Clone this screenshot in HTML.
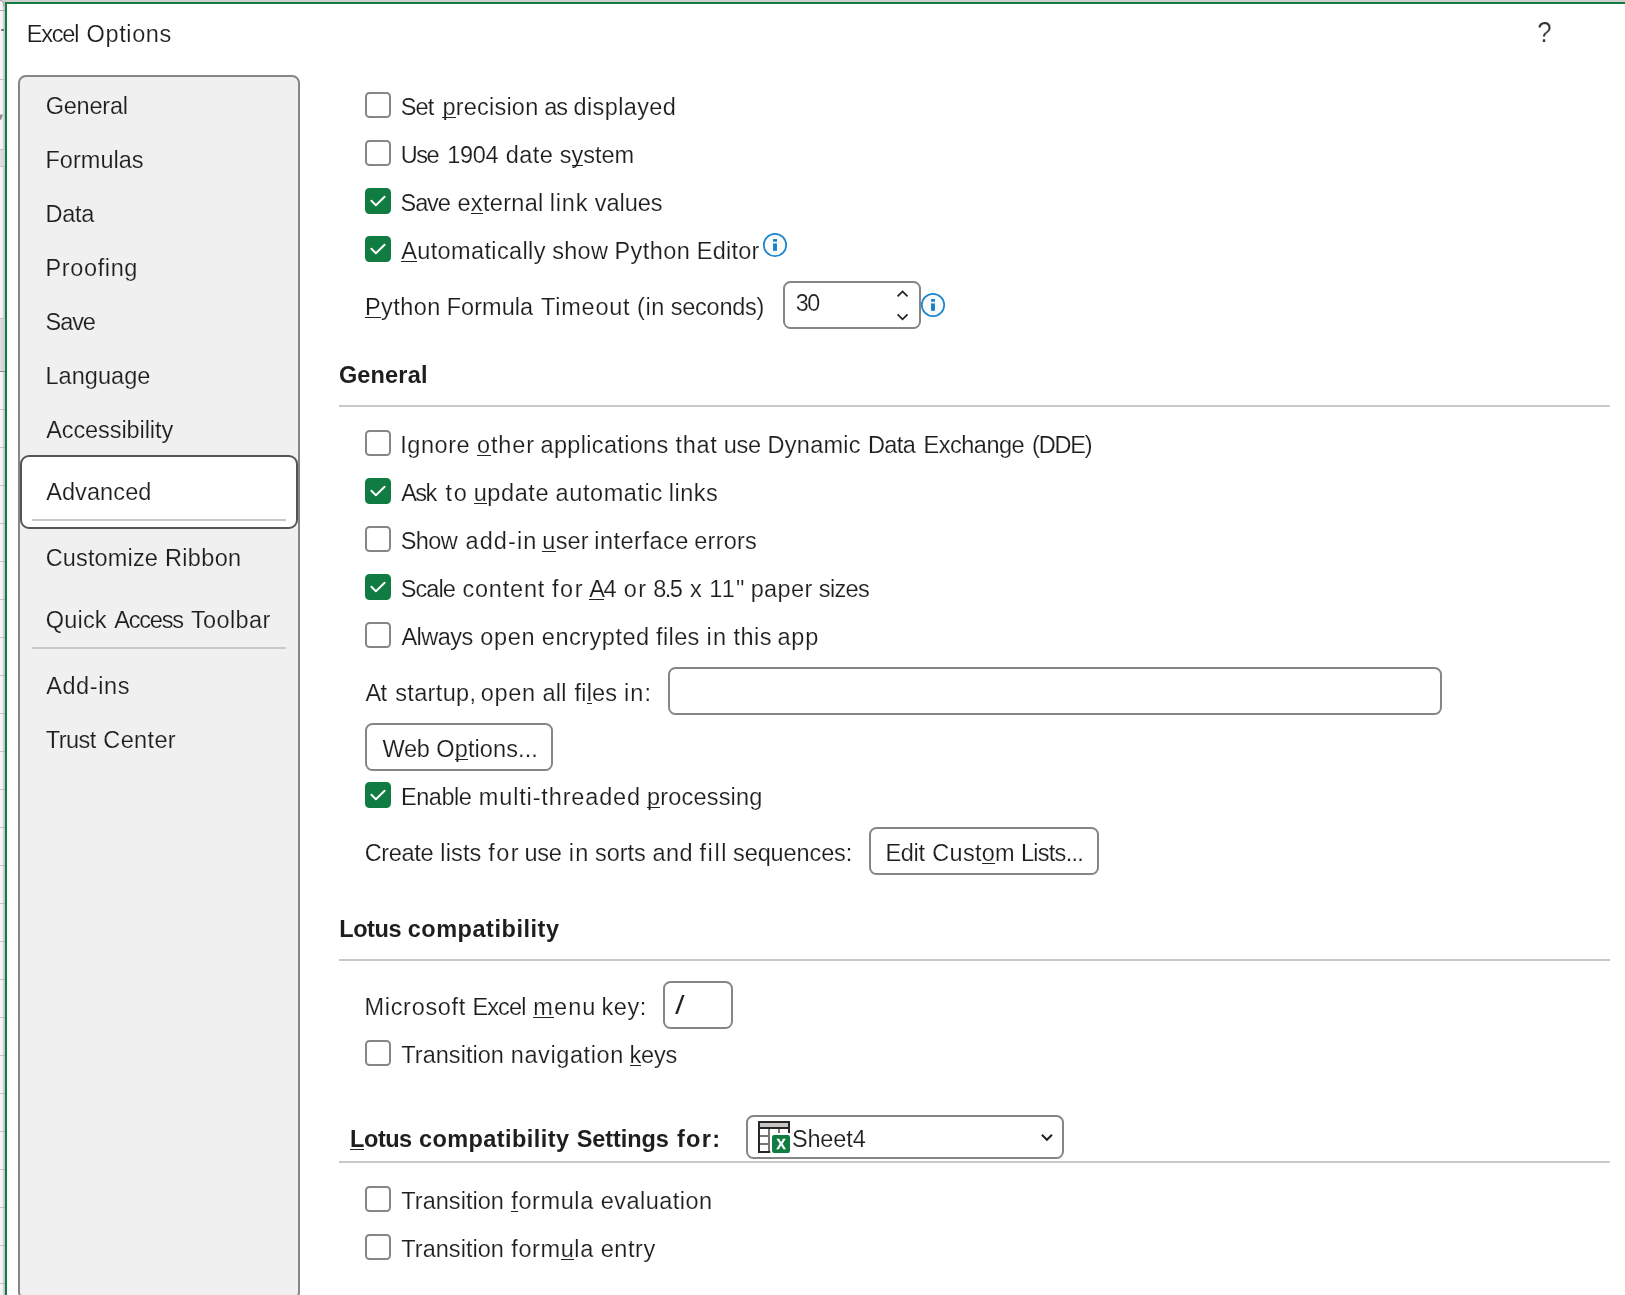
<!DOCTYPE html>
<html lang="en"><head><meta charset="utf-8"><title>Excel Options</title>
<style>
html,body{margin:0;padding:0}
body{width:1625px;height:1295px;overflow:hidden;background:#fff;position:relative;font-family:"Liberation Sans",sans-serif;color:#1e1e1e}
.a{position:absolute}
.t{position:absolute;white-space:nowrap;line-height:30px;font-size:23.5px;-webkit-text-stroke:0.15px #fff}
.t.n{-webkit-text-stroke-color:#f0f0f0}
.t.b{-webkit-text-stroke-width:0}
.t u{text-decoration:none;position:relative}
.t u::after{content:"";position:absolute;left:0;right:0;top:22.85px;height:1.2px;background:#242424}
.t.b u::after{height:1.6px}
.b{font-weight:bold}
.w{position:absolute;left:0;top:0;white-space:pre}
.cb{position:absolute;left:365px;width:22px;height:22px;border:2px solid #868686;border-radius:4.5px;background:#fff}
.cb.on{background:#107c41;border-color:#107c41}
.cb svg{position:absolute;left:-2px;top:-2px}
.box{position:absolute;box-sizing:border-box;border:2px solid #868686;border-radius:7.5px;background:#fff}
.hr{position:absolute;left:339px;width:1271px;height:2px;background:#c8c8c8}
.sep{position:absolute;left:32px;width:254px;height:2px;background:#c8c8c8}
</style></head>
<body>
<div id="dlg" class="a" style="left:0;top:0;width:1625px;height:1295px;overflow:hidden;will-change:transform">
<!-- spreadsheet behind the dialog -->
<div class="a" style="left:0;top:0;width:1625px;height:2px;background:#d0cdcf"></div>
<div class="a" style="left:0;top:0;width:5px;height:1295px;background:linear-gradient(90deg,#f6f6f6 0 1px,#f5f5f5 1px 2px,#ececec 2px 3px,#d6d6d6 3px 4px,#c6c3c6 4px 5px)"></div>
<div class="a" style="left:0;top:149px;width:5px;height:17px;background:linear-gradient(90deg,#e4e4e4,#cfcfcf)"></div>
<div class="a" style="left:0;top:319px;width:5px;height:53px;background:linear-gradient(90deg,#e0e0e0,#cdcdcd)"></div>
<div class="a" style="left:0;top:79px;width:5px;height:1px;background:#c2c2c2"></div>
<div class="a" style="left:0;top:149px;width:5px;height:1px;background:#c2c2c2"></div>
<div class="a" style="left:0;top:166px;width:5px;height:1px;background:#c2c2c2"></div>
<div class="a" style="left:0;top:318px;width:5px;height:1px;background:#c2c2c2"></div>
<div class="a" style="left:0;top:371px;width:5px;height:1px;background:#8a8a8a"></div>
<div class="a" style="left:0;top:409px;width:5px;height:1px;background:linear-gradient(90deg,#d4d4d4,#b4b0b4)"></div>
<div class="a" style="left:0;top:447px;width:5px;height:1px;background:linear-gradient(90deg,#d4d4d4,#b4b0b4)"></div>
<div class="a" style="left:0;top:485px;width:5px;height:1px;background:linear-gradient(90deg,#d4d4d4,#b4b0b4)"></div>
<div class="a" style="left:0;top:523px;width:5px;height:1px;background:linear-gradient(90deg,#d4d4d4,#b4b0b4)"></div>
<div class="a" style="left:0;top:561px;width:5px;height:1px;background:linear-gradient(90deg,#d4d4d4,#b4b0b4)"></div>
<div class="a" style="left:0;top:599px;width:5px;height:1px;background:linear-gradient(90deg,#d4d4d4,#b4b0b4)"></div>
<div class="a" style="left:0;top:637px;width:5px;height:1px;background:linear-gradient(90deg,#d4d4d4,#b4b0b4)"></div>
<div class="a" style="left:0;top:675px;width:5px;height:1px;background:linear-gradient(90deg,#d4d4d4,#b4b0b4)"></div>
<div class="a" style="left:0;top:713px;width:5px;height:1px;background:linear-gradient(90deg,#d4d4d4,#b4b0b4)"></div>
<div class="a" style="left:0;top:751px;width:5px;height:1px;background:linear-gradient(90deg,#d4d4d4,#b4b0b4)"></div>
<div class="a" style="left:0;top:789px;width:5px;height:1px;background:linear-gradient(90deg,#d4d4d4,#b4b0b4)"></div>
<div class="a" style="left:0;top:827px;width:5px;height:1px;background:linear-gradient(90deg,#d4d4d4,#b4b0b4)"></div>
<div class="a" style="left:0;top:865px;width:5px;height:1px;background:linear-gradient(90deg,#d4d4d4,#b4b0b4)"></div>
<div class="a" style="left:0;top:903px;width:5px;height:1px;background:linear-gradient(90deg,#d4d4d4,#b4b0b4)"></div>
<div class="a" style="left:0;top:941px;width:5px;height:1px;background:linear-gradient(90deg,#d4d4d4,#b4b0b4)"></div>
<div class="a" style="left:0;top:979px;width:5px;height:1px;background:linear-gradient(90deg,#d4d4d4,#b4b0b4)"></div>
<div class="a" style="left:0;top:1017px;width:5px;height:1px;background:linear-gradient(90deg,#d4d4d4,#b4b0b4)"></div>
<div class="a" style="left:0;top:1055px;width:5px;height:1px;background:linear-gradient(90deg,#d4d4d4,#b4b0b4)"></div>
<div class="a" style="left:0;top:1093px;width:5px;height:1px;background:linear-gradient(90deg,#d4d4d4,#b4b0b4)"></div>
<div class="a" style="left:0;top:1131px;width:5px;height:1px;background:linear-gradient(90deg,#d4d4d4,#b4b0b4)"></div>
<div class="a" style="left:0;top:1169px;width:5px;height:1px;background:linear-gradient(90deg,#d4d4d4,#b4b0b4)"></div>
<div class="a" style="left:0;top:1207px;width:5px;height:1px;background:linear-gradient(90deg,#d4d4d4,#b4b0b4)"></div>
<div class="a" style="left:0;top:1245px;width:5px;height:1px;background:linear-gradient(90deg,#d4d4d4,#b4b0b4)"></div>
<div class="a" style="left:0;top:1283px;width:5px;height:1px;background:linear-gradient(90deg,#d4d4d4,#b4b0b4)"></div>
<div class="a" style="left:-2px;top:0;width:5px;height:5px;border:1.3px solid #a3a0a3;border-left:0;border-bottom:0;border-top-right-radius:4px"></div>
<div class="a" style="left:0;top:10px;width:5px;height:1.4px;background:#a9a7a9"></div>
<div class="a" style="left:1px;top:29px;width:3px;height:2px;background:#7d7d7d"></div>
<svg class="a" style="left:0;top:113px" width="5" height="9" viewBox="0 0 5 9"><path d="M0 1.6 H3 L1.2 6.4 L0 6.9 Z" fill="#8e8e8e"/></svg>
<div class="a" style="left:5px;top:2px;width:1620px;height:2px;background:#107c41"></div>
<div class="a" style="left:5px;top:2px;width:2px;height:1293px;background:#107c41"></div>
<div class="a" style="left:18px;top:75px;width:278px;height:1221px;border:2px solid #868686;border-radius:8px;background:#f0f0f0"></div>
<div class="a" style="left:20px;top:455px;width:274px;height:70px;border:2px solid #555;border-radius:9px;background:#fff"></div>
<div class="sep" style="top:519px"></div>
<div class="sep" style="top:647px"></div>
<div class="hr" style="top:405px"></div>
<div class="hr" style="top:959px"></div>
<div class="hr" style="top:1161px"></div>
<div class="cb" style="top:92px"></div>
<div class="cb" style="top:140px"></div>
<div class="cb on" style="top:188px"><svg width="26" height="26" viewBox="0 0 26 26"><path d="M6.4 12.7 L10.9 17.2 L19.6 8.7" fill="none" stroke="#fff" stroke-width="2" stroke-linecap="round" stroke-linejoin="round"/></svg></div>
<div class="cb on" style="top:236px"><svg width="26" height="26" viewBox="0 0 26 26"><path d="M6.4 12.7 L10.9 17.2 L19.6 8.7" fill="none" stroke="#fff" stroke-width="2" stroke-linecap="round" stroke-linejoin="round"/></svg></div>
<div class="cb" style="top:430px"></div>
<div class="cb on" style="top:478px"><svg width="26" height="26" viewBox="0 0 26 26"><path d="M6.4 12.7 L10.9 17.2 L19.6 8.7" fill="none" stroke="#fff" stroke-width="2" stroke-linecap="round" stroke-linejoin="round"/></svg></div>
<div class="cb" style="top:526px"></div>
<div class="cb on" style="top:574px"><svg width="26" height="26" viewBox="0 0 26 26"><path d="M6.4 12.7 L10.9 17.2 L19.6 8.7" fill="none" stroke="#fff" stroke-width="2" stroke-linecap="round" stroke-linejoin="round"/></svg></div>
<div class="cb" style="top:622px"></div>
<div class="cb on" style="top:782px"><svg width="26" height="26" viewBox="0 0 26 26"><path d="M6.4 12.7 L10.9 17.2 L19.6 8.7" fill="none" stroke="#fff" stroke-width="2" stroke-linecap="round" stroke-linejoin="round"/></svg></div>
<div class="cb" style="top:1040px"></div>
<div class="cb" style="top:1186px"></div>
<div class="cb" style="top:1234px"></div>
<div class="box" style="left:783px;top:281px;width:138px;height:48px"></div>
<div class="box" style="left:668px;top:667px;width:774px;height:48px"></div>
<div class="box" style="left:365px;top:723px;width:188px;height:48px"></div>
<div class="box" style="left:869px;top:827px;width:230px;height:48px"></div>
<div class="box" style="left:663px;top:981px;width:70px;height:48px"></div>
<div class="box" style="left:746px;top:1115px;width:318px;height:44px"></div>
<svg class="a" style="left:894px;top:286px" width="18" height="40" viewBox="0 0 18 40"><path d="M3.6 10.4 L8.55 5.45 L13.5 10.4 M3.6 28.4 L8.55 33.35 L13.5 28.4" fill="none" stroke="#1f1f1f" stroke-width="1.7" stroke-linecap="butt" stroke-linejoin="miter"/></svg>
<svg class="a" style="left:1036px;top:1128px" width="22" height="20" viewBox="0 0 22 20"><path d="M5.85 6.7 L10.92 11.75 L16 6.7" fill="none" stroke="#232323" stroke-width="2" stroke-linecap="butt" stroke-linejoin="miter"/></svg>
<svg class="a" style="left:762px;top:232px" width="26" height="26" viewBox="0 0 26 26"><circle cx="13" cy="13" r="11.2" fill="#fbfbfb" stroke="#1b86cf" stroke-width="1.7"/><rect x="11.05" y="11.4" width="3.9" height="7.4" fill="#1580cc"/><rect x="11.05" y="7.05" width="3.95" height="2.65" fill="#1580cc"/></svg>
<svg class="a" style="left:920px;top:292px" width="26" height="26" viewBox="0 0 26 26"><circle cx="13" cy="13" r="11.2" fill="#fbfbfb" stroke="#1b86cf" stroke-width="1.7"/><rect x="11.05" y="11.4" width="3.9" height="7.4" fill="#1580cc"/><rect x="11.05" y="7.05" width="3.95" height="2.65" fill="#1580cc"/></svg>
<svg class="a" style="left:756px;top:1119px" width="36" height="36" viewBox="0 0 36 36">
<rect x="3" y="3" width="30" height="6" fill="#c8c6c4"/>
<path d="M3 3 H33 V9 H3 Z" fill="none" stroke="#292827" stroke-width="2"/>
<path d="M3 9 V33 H14.3 M33 9 V14" fill="none" stroke="#292827" stroke-width="2"/>
<path d="M13 10 V32 M4 17 H12 M4 25 H12 M23 10 V14" fill="none" stroke="#797775" stroke-width="2"/>
<rect x="16" y="16" width="18" height="18" rx="2.2" fill="#107c41"/>
<text x="25.1" y="30.1" text-anchor="middle" font-family="Liberation Sans, sans-serif" font-weight="bold" font-size="13.8" fill="#fff" stroke="#fff" stroke-width=".35">X</text>
</svg>
<div class="t" style="left:1536.1px;top:12px;font-size:30px;line-height:40px;color:#333;transform:scaleX(.86);transform-origin:50% 50%">?</div>
<div class="t" style="left:0;top:19px"><span class="w" style="left:26.70px;letter-spacing:-1.197px">Excel </span><span class="w" style="left:86.54px;letter-spacing:0.627px">Options</span></div>
<div class="t n" style="left:0;top:91px"><span class="w" style="left:45.66px;letter-spacing:-0.210px">General</span></div>
<div class="t n" style="left:0;top:145px"><span class="w" style="left:45.50px;letter-spacing:0.014px">Formulas</span></div>
<div class="t n" style="left:0;top:199px"><span class="w" style="left:45.50px;letter-spacing:-0.254px">Data</span></div>
<div class="t n" style="left:0;top:253px"><span class="w" style="left:45.50px;letter-spacing:0.629px">Proofing</span></div>
<div class="t n" style="left:0;top:307px"><span class="w" style="left:45.58px;letter-spacing:-1.093px">Save</span></div>
<div class="t n" style="left:0;top:361px"><span class="w" style="left:45.50px;letter-spacing:0.044px">Language</span></div>
<div class="t n" style="left:0;top:415px"><span class="w" style="left:46.14px;letter-spacing:-0.074px">Accessibility</span></div>
<div class="t" style="left:0;top:477px"><span class="w" style="left:46.14px;letter-spacing:0.109px">Advanced</span></div>
<div class="t n" style="left:0;top:543px"><span class="w" style="left:45.66px;letter-spacing:0.155px">Customize </span><span class="w" style="left:164.90px;letter-spacing:0.360px">Ribbon</span></div>
<div class="t n" style="left:0;top:605px"><span class="w" style="left:45.74px;letter-spacing:0.195px">Quick </span><span class="w" style="left:114.34px;letter-spacing:-1.210px">Access </span><span class="w" style="left:190.96px;letter-spacing:0.390px">Toolbar</span></div>
<div class="t n" style="left:0;top:671px"><span class="w" style="left:46.14px;letter-spacing:0.608px">Add-ins</span></div>
<div class="t n" style="left:0;top:725px"><span class="w" style="left:45.86px;letter-spacing:-0.561px">Trust </span><span class="w" style="left:103.36px;letter-spacing:0.349px">Center</span></div>
<div class="t" style="left:0;top:92px"><span class="w" style="left:400.68px;letter-spacing:-0.787px">Set </span><span class="w" style="left:442.45px;letter-spacing:0.214px"><u>p</u>recision </span><span class="w" style="left:544.30px;letter-spacing:-1.214px">as </span><span class="w" style="left:573.60px;letter-spacing:0.356px">displayed</span></div>
<div class="t" style="left:0;top:140px"><span class="w" style="left:400.80px;letter-spacing:-1.517px">Use </span><span class="w" style="left:447.20px;letter-spacing:-0.304px">1904 </span><span class="w" style="left:505.70px;letter-spacing:0.489px">date </span><span class="w" style="left:559.86px;letter-spacing:-0.025px">s<u>y</u>stem</span></div>
<div class="t" style="left:0;top:188px"><span class="w" style="left:400.58px;letter-spacing:-1.126px">Save </span><span class="w" style="left:457.45px;letter-spacing:0.321px">e<u>x</u>ternal </span><span class="w" style="left:549.81px;letter-spacing:0.808px">link </span><span class="w" style="left:594.83px;letter-spacing:-0.046px">values</span></div>
<div class="t" style="left:0;top:236px"><span class="w" style="left:401.24px;letter-spacing:0.371px"><u>A</u>utomatically </span><span class="w" style="left:552.36px;letter-spacing:0.214px">show </span><span class="w" style="left:614.40px;letter-spacing:0.473px">Python </span><span class="w" style="left:696.80px;letter-spacing:0.234px">Editor</span></div>
<div class="t" style="left:0;top:292px"><span class="w" style="left:364.90px;letter-spacing:0.453px"><u>P</u>ython </span><span class="w" style="left:446.70px;letter-spacing:0.049px">Formula </span><span class="w" style="left:541.06px;letter-spacing:0.756px">Timeout </span><span class="w" style="left:637.12px;letter-spacing:0.573px">(in </span><span class="w" style="left:670.76px;letter-spacing:-0.242px">seconds)</span></div>
<div class="t" style="left:0;top:288px;font-size:23.3px"><span class="w" style="left:795.81px;letter-spacing:-1.408px">30</span></div>
<div class="t b" style="left:0;top:360px"><span class="w" style="left:338.90px;letter-spacing:0.177px">General</span></div>
<div class="t" style="left:0;top:430px"><span class="w" style="left:400.30px;letter-spacing:0.540px">Ignore </span><span class="w" style="left:477.00px;letter-spacing:0.852px"><u>o</u>ther </span><span class="w" style="left:540.60px;letter-spacing:0.318px">applications </span><span class="w" style="left:675.43px;letter-spacing:0.761px">that </span><span class="w" style="left:723.76px;letter-spacing:-0.248px">use </span><span class="w" style="left:767.50px;letter-spacing:0.281px">Dynamic </span><span class="w" style="left:867.90px;letter-spacing:-0.588px">Data </span><span class="w" style="left:923.60px;letter-spacing:-0.499px">Exchange </span><span class="w" style="left:1032.12px;letter-spacing:-1.211px">(DDE)</span></div>
<div class="t" style="left:0;top:478px"><span class="w" style="left:401.29px;letter-spacing:-1.600px">Ask </span><span class="w" style="left:445.60px;letter-spacing:1.600px">to </span><span class="w" style="left:473.66px;letter-spacing:0.601px"><u>u</u>pdate </span><span class="w" style="left:555.60px;letter-spacing:0.587px">automatic </span><span class="w" style="left:668.71px;letter-spacing:0.522px">links</span></div>
<div class="t" style="left:0;top:526px"><span class="w" style="left:400.68px;letter-spacing:-0.537px">Show </span><span class="w" style="left:465.60px;letter-spacing:1.064px">add-in </span><span class="w" style="left:542.36px;letter-spacing:0.195px"><u>u</u>ser </span><span class="w" style="left:594.32px;letter-spacing:0.473px">interface </span><span class="w" style="left:694.25px;letter-spacing:0.244px">errors</span></div>
<div class="t" style="left:0;top:574px"><span class="w" style="left:400.68px;letter-spacing:-0.929px">Scale </span><span class="w" style="left:462.46px;letter-spacing:0.789px">content </span><span class="w" style="left:551.91px;letter-spacing:1.600px">for </span><span class="w" style="left:589.34px;letter-spacing:-1.437px"><u>A</u>4 </span><span class="w" style="left:623.80px;letter-spacing:1.447px">or </span><span class="w" style="left:653.21px;letter-spacing:-1.464px">8.5 </span><span class="w" style="left:690.10px">x </span><span class="w" style="left:709.20px;letter-spacing:1.252px">11&quot; </span><span class="w" style="left:750.65px;letter-spacing:0.389px">paper </span><span class="w" style="left:818.86px;letter-spacing:-0.683px">sizes</span></div>
<div class="t" style="left:0;top:622px"><span class="w" style="left:401.44px;letter-spacing:-0.521px">Always </span><span class="w" style="left:480.20px;letter-spacing:0.708px">open </span><span class="w" style="left:541.85px;letter-spacing:0.512px">encrypted </span><span class="w" style="left:656.05px;letter-spacing:0.383px">files </span><span class="w" style="left:706.42px;letter-spacing:1.308px">in </span><span class="w" style="left:733.43px;letter-spacing:0.535px">this </span><span class="w" style="left:777.50px;letter-spacing:0.802px">app</span></div>
<div class="t" style="left:0;top:678px"><span class="w" style="left:365.44px;letter-spacing:-0.627px">At </span><span class="w" style="left:395.16px;letter-spacing:0.362px">startup, </span><span class="w" style="left:480.70px;letter-spacing:0.708px">open </span><span class="w" style="left:542.50px;letter-spacing:0.256px">all </span><span class="w" style="left:574.55px;letter-spacing:0.183px">fi<u>l</u>es </span><span class="w" style="left:624.02px;letter-spacing:1.078px">in:</span></div>
<div class="t" style="left:0;top:734px"><span class="w" style="left:382.43px;letter-spacing:-0.257px">Web </span><span class="w" style="left:436.34px;letter-spacing:0.097px">O<u>p</u>tions...</span></div>
<div class="t" style="left:0;top:782px"><span class="w" style="left:401.00px;letter-spacing:-0.460px">Enable </span><span class="w" style="left:478.80px;letter-spacing:0.850px">multi-threaded </span><span class="w" style="left:647.05px;letter-spacing:0.173px"><u>p</u>rocessing</span></div>
<div class="t" style="left:0;top:838px"><span class="w" style="left:364.76px;letter-spacing:-0.351px">Create </span><span class="w" style="left:440.31px;letter-spacing:0.130px">lists </span><span class="w" style="left:488.35px;letter-spacing:1.458px">for </span><span class="w" style="left:524.56px;letter-spacing:-0.348px">use </span><span class="w" style="left:568.82px;letter-spacing:1.308px">in </span><span class="w" style="left:595.06px;letter-spacing:-0.066px">sorts </span><span class="w" style="left:652.50px;letter-spacing:0.373px">and </span><span class="w" style="left:699.46px;letter-spacing:1.600px">fill </span><span class="w" style="left:733.06px;letter-spacing:-0.107px">sequences:</span></div>
<div class="t" style="left:0;top:838px"><span class="w" style="left:885.40px;letter-spacing:-0.259px">Edit </span><span class="w" style="left:932.36px;letter-spacing:0.244px">Cust<u>o</u>m </span><span class="w" style="left:1021.00px;letter-spacing:-0.738px">Lists...</span></div>
<div class="t b" style="left:0;top:914px"><span class="w" style="left:339.32px;letter-spacing:-0.454px">Lotus </span><span class="w" style="left:407.70px;letter-spacing:0.534px">compatibility</span></div>
<div class="t" style="left:0;top:992px"><span class="w" style="left:364.50px;letter-spacing:0.689px">Microsoft </span><span class="w" style="left:472.40px;letter-spacing:-0.847px">Excel </span><span class="w" style="left:533.30px;letter-spacing:1.100px"><u>m</u>enu </span><span class="w" style="left:601.52px;letter-spacing:0.538px">key:</span></div>
<div class="t" style="left:0;top:990px;font-size:25.4px"><span class="w" style="left:675.20px;transform:scaleX(1.373);transform-origin:0 50%">/</span></div>
<div class="t" style="left:0;top:1040px"><span class="w" style="left:401.26px;letter-spacing:0.040px">Transition </span><span class="w" style="left:510.80px;letter-spacing:0.585px">navigation </span><span class="w" style="left:629.52px;letter-spacing:-0.182px"><u>k</u>eys</span></div>
<div class="t b" style="left:0;top:1124px"><span class="w" style="left:350.12px;letter-spacing:-0.479px"><u>L</u>otus </span><span class="w" style="left:418.90px;letter-spacing:0.434px">compatibility </span><span class="w" style="left:576.68px;letter-spacing:-0.064px">Settings </span><span class="w" style="left:676.88px;letter-spacing:1.309px">for:</span></div>
<div class="t" style="left:0;top:1124px"><span class="w" style="left:791.88px;letter-spacing:-0.128px">Sheet4</span></div>
<div class="t" style="left:0;top:1186px"><span class="w" style="left:401.26px;letter-spacing:0.040px">Transition </span><span class="w" style="left:511.25px;letter-spacing:0.597px"><u>f</u>ormula </span><span class="w" style="left:600.75px;letter-spacing:0.468px">evaluation</span></div>
<div class="t" style="left:0;top:1234px"><span class="w" style="left:401.26px;letter-spacing:0.040px">Transition </span><span class="w" style="left:511.25px;letter-spacing:0.597px">form<u>u</u>la </span><span class="w" style="left:600.75px;letter-spacing:0.549px">entry</span></div>
</div>
</body></html>
